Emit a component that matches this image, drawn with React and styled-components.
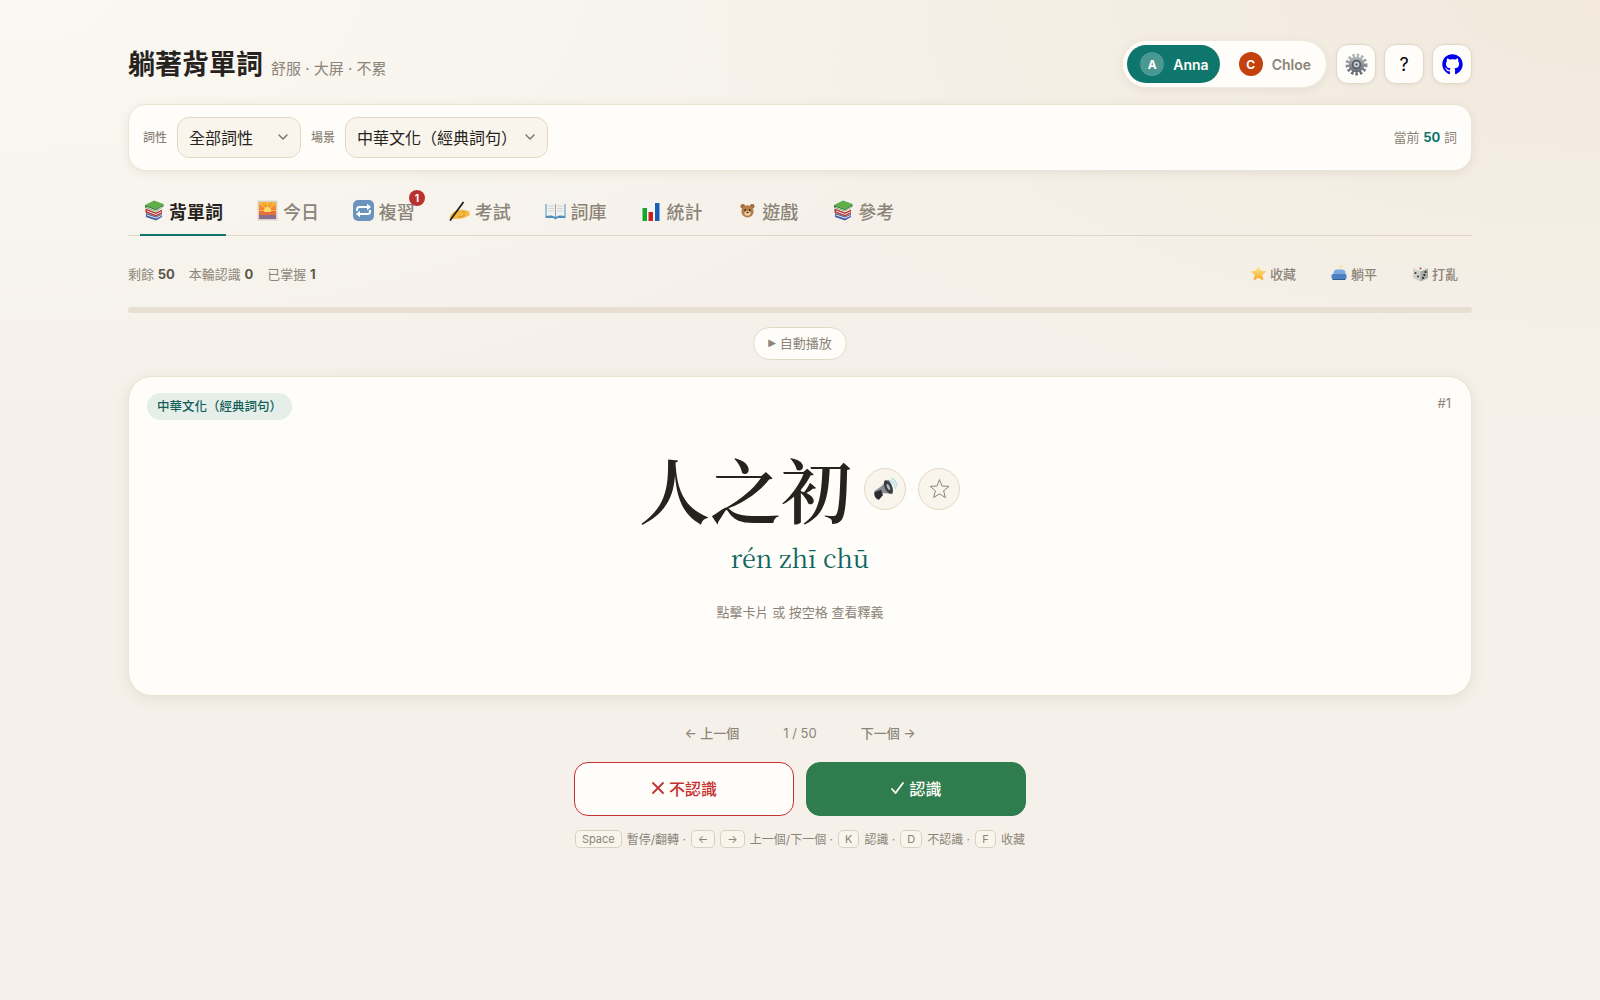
import React from "react";
import styled, { createGlobalStyle } from "styled-components";
import { FaGithub } from "react-icons/fa";

const sans = `Inter, "Noto Sans CJK TC", sans-serif`;
const serif = `"Noto Serif CJK TC", "Noto Serif CJK SC", "Liberation Serif", serif`;

const GlobalStyle = createGlobalStyle`
  html, body { margin: 0; height: 100%; }
  body {
    font-family: ${sans};
    color: #26231e;
    background-color: #f5f1ea;
    background-image:
      radial-gradient(ellipse 900px 420px at 100% 0, #f2e9dc 0%, rgba(242, 233, 220, 0) 100%),
      radial-gradient(ellipse 1000px 420px at 0 0, #fbf8f2 0%, rgba(251, 248, 242, 0) 100%);
    background-repeat: no-repeat;
  }
  * { box-sizing: border-box; }
`;

const Page = styled.div`
  width: 1344px;
  margin: 0 auto;
  padding-top: 40px;
`;

const Header = styled.header`
  display: flex;
  justify-content: space-between;
  align-items: center;
  height: 48px;
`;

const TitleGroup = styled.div`
  display: flex;
  align-items: baseline;
  gap: 8px;
  padding-bottom: 3px;
`;

const Title = styled.h1`
  margin: 0;
  font-size: 27px;
  font-weight: 700;
  color: #26231e;
`;

const Subtitle = styled.span`
  font-size: 15px;
  color: #8c8478;
`;

const HeaderRight = styled.div`
  display: flex;
  align-items: center;
  gap: 8px;
`;

const UserPill = styled.div`
  display: flex;
  align-items: center;
  gap: 6px;
  height: 48px;
  padding: 4px;
  margin-right: 1px;
  background: #fffdf9;
  border: 1px solid #efe8dc;
  border-radius: 24px;
  box-shadow: 0 2px 8px rgba(90, 70, 40, 0.08);
`;

const User = styled.div`
  display: flex;
  align-items: center;
  gap: 9px;
  height: 38px;
  padding: 0 11px 0 13px;
  border-radius: 19px;
  font-size: 14px;
  font-weight: 600;
  background: ${({ $active }) => ($active ? "#0f766e" : "transparent")};
  color: ${({ $active }) => ($active ? "#fffdf9" : "#8c8478")};
`;

const Avatar = styled.span`
  display: flex;
  align-items: center;
  justify-content: center;
  width: 24px;
  height: 24px;
  border-radius: 50%;
  font-size: 12px;
  font-weight: 700;
  color: #fff;
  background: ${({ $color }) => $color};
`;

const IconButton = styled.button`
  display: flex;
  align-items: center;
  justify-content: center;
  width: 40px;
  height: 40px;
  padding: 0;
  background: #fffdf9;
  border: 1px solid #e2d9c8;
  border-radius: 12px;
  box-shadow: 0 1px 4px rgba(90, 70, 40, 0.08);
  font-family: ${sans};
  font-size: 18px;
  color: #000;
`;

const GithubLink = styled(IconButton).attrs({ as: "a", href: "#" })`
  color: #0000ee;
  font-size: 21px;
`;

const FilterBar = styled.div`
  display: flex;
  align-items: center;
  gap: 10px;
  height: 67px;
  margin-top: 16px;
  padding: 0 14px;
  background: #fffdf9;
  border: 1px solid #ece4d5;
  border-radius: 18px;
  box-shadow: 0 2px 10px rgba(90, 70, 40, 0.09);
`;

const FilterLabel = styled.label`
  padding-bottom: 2px;
  font-size: 12px;
  font-weight: 500;
  color: #8c8478;
`;

const SelectWrap = styled.div`
  position: relative;
  width: ${({ $width }) => $width}px;
  height: 41px;

  svg {
    position: absolute;
    right: 12px;
    top: 14px;
    pointer-events: none;
  }
`;

const Select = styled.select`
  appearance: none;
  width: 100%;
  height: 100%;
  padding: 0 30px 0 11px;
  background: #f9f5ec;
  border: 1px solid #e2d9c5;
  border-radius: 12px;
  font-family: ${sans};
  font-size: 16px;
  color: #26231e;
`;

const Count = styled.div`
  margin-left: auto;
  padding-bottom: 2px;
  font-size: 13px;
  color: #8c8478;

  b {
    font-weight: 700;
    color: #0f766e;
  }
`;

const Tabs = styled.nav`
  display: flex;
  gap: 27.9px;
  height: 65px;
  padding: 0 12px;
  border-bottom: 1px solid #e0d9c8;
`;

const Tab = styled.a`
  position: relative;
  display: flex;
  align-items: center;
  gap: 4px;
  height: 65px;
  padding: 16px 3px 0 3px;
  font-size: 18px;
  font-weight: ${({ $active }) => ($active ? 700 : 500)};
  color: ${({ $active }) => ($active ? "#26231e" : "#8c8478")};
  border-bottom: 2px solid ${({ $active }) => ($active ? "#0f766e" : "transparent")};
`;

const TabIcon = styled.span`
  display: flex;
  align-items: center;
  justify-content: center;
  width: 22px;
  height: 22px;
`;

const Badge = styled.span`
  position: absolute;
  top: 19px;
  right: -7px;
  display: flex;
  align-items: center;
  justify-content: center;
  width: 16px;
  height: 16px;
  border-radius: 50%;
  background: #b83232;
  color: #fff;
  font-size: 10px;
  font-weight: 700;
`;

const StatsRow = styled.div`
  display: flex;
  justify-content: space-between;
  align-items: center;
  height: 34px;
  margin-top: 20px;
`;

const Stats = styled.div`
  display: flex;
  gap: 14px;
  font-size: 13px;
  color: #8c8478;

  b {
    font-weight: 700;
    color: #5c554a;
  }
`;

const Actions = styled.div`
  display: flex;
  gap: 7px;
`;

const ActionButton = styled.button`
  display: flex;
  align-items: center;
  gap: 3px;
  padding: 6px 14px;
  background: none;
  border: none;
  font-family: ${sans};
  font-size: 13px;
  font-weight: 500;
  color: #8c8478;
`;

const Progress = styled.div`
  height: 6px;
  margin-top: 17px;
  background: #e7e0d2;
  border-radius: 3px;
`;

const AutoRow = styled.div`
  display: flex;
  justify-content: center;
  margin-top: 14px;
`;

const AutoButton = styled.button`
  display: flex;
  align-items: center;
  gap: 4px;
  height: 33px;
  padding: 0 14px 2px;
  background: #fffdf9;
  border: 1px solid #e2d9c5;
  border-radius: 17px;
  font-family: ${sans};
  font-size: 13px;
  color: #8c8478;
`;

const PlayMark = styled.span`
  font-family: "DejaVu Sans", sans-serif;
  font-size: 10px;
`;

const Card = styled.section`
  position: relative;
  height: 320px;
  margin-top: 16px;
  padding-top: 16px;
  background: #fffdf9;
  border: 1px solid #ece4d5;
  border-radius: 24px;
  box-shadow: 0 3px 14px rgba(90, 70, 40, 0.1);
`;

const CategoryTag = styled.span`
  display: inline-flex;
  align-items: center;
  height: 27px;
  margin-left: 18px;
  padding: 0 10px 2px;
  background: #e6eee9;
  border-radius: 14px;
  font-size: 12.5px;
  font-weight: 500;
  color: #115e59;
`;

const CardIndex = styled.span`
  position: absolute;
  top: 18px;
  right: 20px;
  font-size: 13px;
  color: #8c8478;
`;

const WordRow = styled.div`
  display: flex;
  justify-content: center;
  align-items: center;
  gap: 12px;
  margin-top: 22px;
  padding-right: 1px;
`;

const Word = styled.div`
  padding-bottom: 3px;
  font-family: ${serif};
  font-size: 71px;
  font-weight: 600;
  line-height: 90px;
  color: #26231e;
`;

const RoundButton = styled.button`
  display: flex;
  align-items: center;
  justify-content: center;
  width: 42px;
  height: 42px;
  padding: 0;
  background: #f9f5ec;
  border: 1px solid #e2d9c5;
  border-radius: 50%;
`;

const Pinyin = styled.div`
  margin-top: 4px;
  text-align: center;
  font-family: ${serif};
  font-size: 25.2px;
  line-height: 36px;
  color: #0f665f;
`;

const CardHint = styled.div`
  margin-top: 27px;
  text-align: center;
  font-size: 13px;
  color: #8c8478;
`;

const Pager = styled.div`
  display: flex;
  justify-content: center;
  align-items: center;
  gap: 44px;
  height: 24px;
  margin-top: 25px;
  font-size: 13px;
  color: #8c8478;
`;

const PagerLink = styled.a`
  padding-bottom: 1px;
  font-weight: 500;
`;

const Answers = styled.div`
  display: flex;
  justify-content: center;
  gap: 12px;
  margin-top: 17px;
`;

const AnswerButton = styled.button`
  display: flex;
  align-items: center;
  justify-content: center;
  gap: 4px;
  width: 220px;
  height: 54px;
  padding-bottom: 3px;
  border-radius: 14px;
  font-family: ${sans};
  font-size: 16px;
  font-weight: 500;
  background: ${({ $good }) => ($good ? "#2f7d4f" : "#fffdf9")};
  border: 1px solid ${({ $good }) => ($good ? "#2f7d4f" : "#c53030")};
  color: ${({ $good }) => ($good ? "#fffdf9" : "#c53030")};
`;

const Shortcuts = styled.div`
  display: flex;
  justify-content: center;
  align-items: center;
  gap: 5px;
  margin-top: 12px;
  font-size: 12px;
  color: #8c8478;
`;

const Kbd = styled.kbd`
  display: inline-flex;
  align-items: center;
  justify-content: center;
  min-width: 21px;
  height: 18px;
  margin-top: 2px;
  padding: 0 6px;
  background: #f9f5ec;
  border: 1px solid #d9d1bf;
  border-radius: 5px;
  font-family: ${sans};
  font-size: 11px;
  color: #8c8478;
`;

const Chevron = () => (
  <svg width="12" height="12" viewBox="0 0 12 12" fill="none" stroke="#7d7568" strokeWidth="1.5" strokeLinecap="round" strokeLinejoin="round">
    <path d="M2 4l4 4 4-4" />
  </svg>
);

const Books = () => (
  <svg width="20" height="21" viewBox="0 0 20 21">
    <path d="M2 13l10 3.500 6-2.500v3l-6 3.500L2 17z" fill="#3f5fa8" />
    <path d="M3 14.500l9 3 5.500-2.500v1L12 18.500l-9-3z" fill="#e8e6e0" />
    <path d="M1.500 8.500l10.500 4 6-3v4l-6 3L1.500 12.500z" fill="#b8322e" />
    <path d="M3 10.500l9 3.500 5.500-2.700v1L12 15l-9-3.500z" fill="#eee" />
    <path d="M1 5l9-4.500 9.500 3.500-7.500 5z" fill="#5fae46" />
    <path d="M1 5l11 4 7.500-5v2.500L12 11.500 1 7.500z" fill="#2f7a33" />
    <path d="M2.500 6.700l9.500 3.500 6.500-4.200v.7L12 11 2.500 7.500z" fill="#f1efe8" />
  </svg>
);

const Sunrise = () => (
  <svg width="21" height="21" viewBox="0 0 21 21">
    <defs>
      <linearGradient id="sky" x1="0" y1="0" x2="0" y2="1">
        <stop offset="0" stopColor="#f7b733" />
        <stop offset="0.6" stopColor="#f0692c" />
        <stop offset="1" stopColor="#8b6a8e" />
      </linearGradient>
    </defs>
    <rect x="0.500" y="0.500" width="20" height="20" fill="#d8d4cc" />
    <rect x="2" y="2" width="17" height="17" fill="url(#sky)" />
    <circle cx="10.500" cy="10.500" r="3.500" fill="#ffe16b" />
    <path d="M10.500 10.500L3 3M10.500 10.500L18 3M10.500 10.500V2M10.500 10.500H2M10.500 10.500H19" stroke="#fbd35a" strokeWidth="0.800" />
    <rect x="2" y="12" width="17" height="3" fill="#e5703a" />
    <rect x="2" y="15" width="17" height="4" fill="#8a6f8c" />
  </svg>
);

const Repeat = () => (
  <svg width="21" height="21" viewBox="0 0 21 21" fill="none">
    <rect width="21" height="21" rx="5" fill="#6a94bd" />
    <path d="M4 11V9.500A2.500 2.500 0 0 1 6.500 7H15" stroke="#fff" strokeWidth="2" />
    <path d="M17 10v1.500a2.500 2.500 0 0 1-2.500 2.500H6" stroke="#fff" strokeWidth="2" />
    <path d="M14 3.800L18 7l-4 3.200zM7 10.800L3 14l4 3.200z" fill="#fff" />
  </svg>
);

const WritingHand = () => (
  <svg width="22" height="20" viewBox="0 0 22 20">
    <path d="M1 15.500c1.500-3.500 4-5 7-6l4.500-1 3 .5 5 1.500v4l-7 3-9 .5-4-1z" fill="#f5b942" />
    <path d="M9 16c3 0 5.500-1 7.500-2.500M13 10.500l3 1" stroke="#c98a1e" strokeWidth="0.800" fill="none" />
    <path d="M1 19.500L14.500 1" stroke="#1a1a1a" strokeWidth="1.700" />
  </svg>
);

const OpenBook = () => (
  <svg width="21" height="19" viewBox="0 0 21 19">
    <path d="M0.500 3h20v14h-8l-2 1.500-2-1.500h-8z" fill="#4f8fb8" />
    <path d="M1.500 2c3-1 6.500-1 9 1 2.500-2 6-2 9-1v13c-3-1-6.500-.7-9 1-2.500-1.700-6-2-9-1z" fill="#f1f1ee" />
    <path d="M10.500 3v13" stroke="#8d8d8a" strokeWidth="0.800" />
    <path d="M3 5h6M3 7.500h6M3 10h6M12 5h6M12 7.500h6M12 10h6" stroke="#c5c5c2" strokeWidth="0.700" />
  </svg>
);

const BarChart = () => (
  <svg width="20" height="21" viewBox="0 0 20 21">
    <rect width="20" height="21" fill="#f4f4f2" />
    <rect x="1.500" y="8" width="4.500" height="13" fill="#18a52f" />
    <rect x="7.500" y="12" width="4.500" height="9" fill="#c81f1f" />
    <rect x="14" y="3" width="4.500" height="18" fill="#1a5fb4" />
  </svg>
);

const Bear = () => (
  <svg width="15" height="15" viewBox="0 0 16 16">
    <circle cx="3" cy="3.500" r="2.500" fill="#a56c3c" />
    <circle cx="13" cy="3.500" r="2.500" fill="#a56c3c" />
    <circle cx="8" cy="9" r="6.500" fill="#b77d48" />
    <ellipse cx="8" cy="11" rx="3.200" ry="2.600" fill="#ecd3ae" />
    <circle cx="5.500" cy="7.500" r="0.900" fill="#2b1a10" />
    <circle cx="10.500" cy="7.500" r="0.900" fill="#2b1a10" />
    <ellipse cx="8" cy="10" rx="1.200" ry="0.800" fill="#2b1a10" />
  </svg>
);

const StarEmoji = () => (
  <svg width="17" height="16" viewBox="0 0 17 16">
    <defs>
      <linearGradient id="gold" x1="0" y1="0" x2="0" y2="1">
        <stop offset="0" stopColor="#ffeea0" />
        <stop offset="1" stopColor="#f7a51e" />
      </linearGradient>
    </defs>
    <path d="M8.500 0.500l2.400 5 5.500.7-4 3.800 1 5.500-4.900-2.700-4.900 2.700 1-5.500-4-3.800 5.500-.7z" fill="url(#gold)" />
  </svg>
);

const Couch = () => (
  <svg width="17" height="16" viewBox="0 0 17 16">
    <circle cx="10" cy="1.500" r="1.500" fill="#f6e3a8" />
    <path d="M12 4l4 2v8h-1V6.500z" fill="#ece8e0" />
    <path d="M2.500 8c0-2 1.500-3.500 3-3.500h6c1.500 0 3 1.500 3 3.500v2h-12z" fill="#7ba8de" />
    <rect x="0.500" y="9" width="15" height="5" rx="1.500" fill="#4a80c4" />
    <rect x="1.500" y="14" width="13" height="1" fill="#2f5a94" />
  </svg>
);

const Dice = () => (
  <svg width="17" height="17" viewBox="0 0 17 17">
    <path d="M8.500 0.500l7.500 3v9.500l-7.500 3.500-7.500-3.500V3.500z" fill="#cfcfcb" />
    <path d="M1 3.500l7.500 3 7.500-3-7.500-3z" fill="#eeeeea" />
    <path d="M8.500 6.500V16.500l7.500-3.500V3.500z" fill="#a9a9a5" />
    <circle cx="8.500" cy="3.500" r="1" fill="#cc3b3b" />
    <circle cx="3.500" cy="8" r="1" fill="#333" />
    <circle cx="6" cy="11.500" r="1" fill="#333" />
    <circle cx="11" cy="13" r="1" fill="#222" />
    <circle cx="13.500" cy="7" r="1" fill="#222" />
    <circle cx="12.300" cy="10" r="1" fill="#222" />
  </svg>
);

const Gear = () => (
  <svg width="23" height="23" viewBox="0 0 22 22">
    <defs>
      <linearGradient id="steel" x1="0" y1="0" x2="0" y2="1">
        <stop offset="0" stopColor="#b4b8bd" />
        <stop offset="1" stopColor="#666b75" />
      </linearGradient>
    </defs>
    <circle cx="11" cy="11" r="8.500" fill="none" stroke="url(#steel)" strokeWidth="4" strokeDasharray="2.300 1.700" />
    <circle cx="11" cy="11" r="7.500" fill="url(#steel)" />
    <circle cx="11" cy="11" r="4.500" fill="#565b65" />
    <circle cx="11" cy="11" r="2.800" fill="#c9ccd0" />
    <circle cx="11" cy="11" r="1" fill="#444" />
  </svg>
);

const Speaker = () => (
  <svg width="24" height="24" viewBox="1 1 18 18" fill="none">
    <path d="M13.500 3.500c2.500 1 4.200 3.500 4.200 6.500M14.500 2c3 1.200 4.500 3.500 4.500 6.500" stroke="#a8d8ea" strokeWidth="0.800" />
    <path d="M2 11.500l4.500-3 6-5.500c2.500 2 4 7 3.500 10.500l-8.500-.5-3 3z" fill="#8a8e94" />
    <path d="M2 12.500l5-2 1.500 4-3 3.500c-2 0-4-2.500-3.500-5.500z" fill="#2a2c32" />
    <ellipse cx="12.500" cy="8.500" rx="2.700" ry="5.500" transform="rotate(-25 12.500 8.500)" fill="#3a3d44" />
    <ellipse cx="12.500" cy="8.500" rx="1" ry="2.400" transform="rotate(-25 12.500 8.500)" fill="#b8bcc2" />
  </svg>
);

const OutlineStar = () => (
  <svg width="21" height="21" viewBox="0 0 21 21" fill="none" stroke="#8c8478" strokeWidth="1" strokeLinejoin="round">
    <path d="M10.500 1.500l2.500 6.500 7 .4-5.400 4.400 1.800 6.800-5.900-3.800-5.900 3.800 1.800-6.800L1.100 8.400l7-.4z" />
  </svg>
);

const CrossMark = () => (
  <svg width="14" height="14" viewBox="0 0 14 14" fill="none" stroke="#c53030" strokeWidth="1.800" strokeLinecap="round">
    <path d="M2 2l10 10M12 2L2 12" />
  </svg>
);

const CheckMark = () => (
  <svg width="15" height="14" viewBox="0 0 15 14" fill="none" stroke="#fffdf9" strokeWidth="1.800" strokeLinecap="round" strokeLinejoin="round">
    <path d="M2 8l3.500 4L13 2" />
  </svg>
);

const tabs = [
  { label: "背單詞", icon: <Books />, active: true },
  { label: "今日", icon: <Sunrise /> },
  { label: "複習", icon: <Repeat />, badge: 1 },
  { label: "考試", icon: <WritingHand /> },
  { label: "詞庫", icon: <OpenBook /> },
  { label: "統計", icon: <BarChart /> },
  { label: "遊戲", icon: <Bear /> },
  { label: "參考", icon: <Books /> },
];

export default function App() {
  return (
    <>
      <GlobalStyle />
      <Page>
        <Header>
          <TitleGroup>
            <Title>躺著背單詞</Title>
            <Subtitle>舒服 · 大屏 · 不累</Subtitle>
          </TitleGroup>
          <HeaderRight>
            <UserPill>
              <User $active>
                <Avatar $color="rgba(255, 255, 255, 0.25)">A</Avatar>
                Anna
              </User>
              <User>
                <Avatar $color="#c2410c">C</Avatar>
                Chloe
              </User>
            </UserPill>
            <IconButton><Gear /></IconButton>
            <IconButton>?</IconButton>
            <GithubLink><FaGithub /></GithubLink>
          </HeaderRight>
        </Header>

        <FilterBar>
          <FilterLabel>詞性</FilterLabel>
          <SelectWrap $width={124}>
            <Select defaultValue="all">
              <option value="all">全部詞性</option>
            </Select>
            <Chevron />
          </SelectWrap>
          <FilterLabel>場景</FilterLabel>
          <SelectWrap $width={203}>
            <Select defaultValue="culture">
              <option value="culture">中華文化（經典詞句）</option>
            </Select>
            <Chevron />
          </SelectWrap>
          <Count>當前 <b>50</b> 詞</Count>
        </FilterBar>

        <Tabs>
          {tabs.map((tab) => (
            <Tab key={tab.label} $active={tab.active}>
              <TabIcon>{tab.icon}</TabIcon>
              {tab.label}
              {tab.badge && <Badge>{tab.badge}</Badge>}
            </Tab>
          ))}
        </Tabs>

        <StatsRow>
          <Stats>
            <span>剩餘 <b>50</b></span>
            <span>本輪認識 <b>0</b></span>
            <span>已掌握 <b>1</b></span>
          </Stats>
          <Actions>
            <ActionButton><StarEmoji />收藏</ActionButton>
            <ActionButton><Couch />躺平</ActionButton>
            <ActionButton><Dice />打亂</ActionButton>
          </Actions>
        </StatsRow>

        <Progress />

        <AutoRow>
          <AutoButton><PlayMark>▶</PlayMark>自動播放</AutoButton>
        </AutoRow>

        <Card>
          <CategoryTag>中華文化（經典詞句）</CategoryTag>
          <CardIndex>#1</CardIndex>
          <WordRow>
            <Word>人之初</Word>
            <RoundButton><Speaker /></RoundButton>
            <RoundButton><OutlineStar /></RoundButton>
          </WordRow>
          <Pinyin>rén zhī chū</Pinyin>
          <CardHint>點擊卡片 或 按空格 查看釋義</CardHint>
        </Card>

        <Pager>
          <PagerLink>← 上一個</PagerLink>
          <span>1 / 50</span>
          <PagerLink>下一個 →</PagerLink>
        </Pager>

        <Answers>
          <AnswerButton><CrossMark />不認識</AnswerButton>
          <AnswerButton $good><CheckMark />認識</AnswerButton>
        </Answers>

        <Shortcuts>
          <Kbd>Space</Kbd> 暫停/翻轉 · <Kbd>←</Kbd> <Kbd>→</Kbd> 上一個/下一個 · <Kbd>K</Kbd> 認識 · <Kbd>D</Kbd> 不認識 · <Kbd>F</Kbd> 收藏
        </Shortcuts>
      </Page>
    </>
  );
}
